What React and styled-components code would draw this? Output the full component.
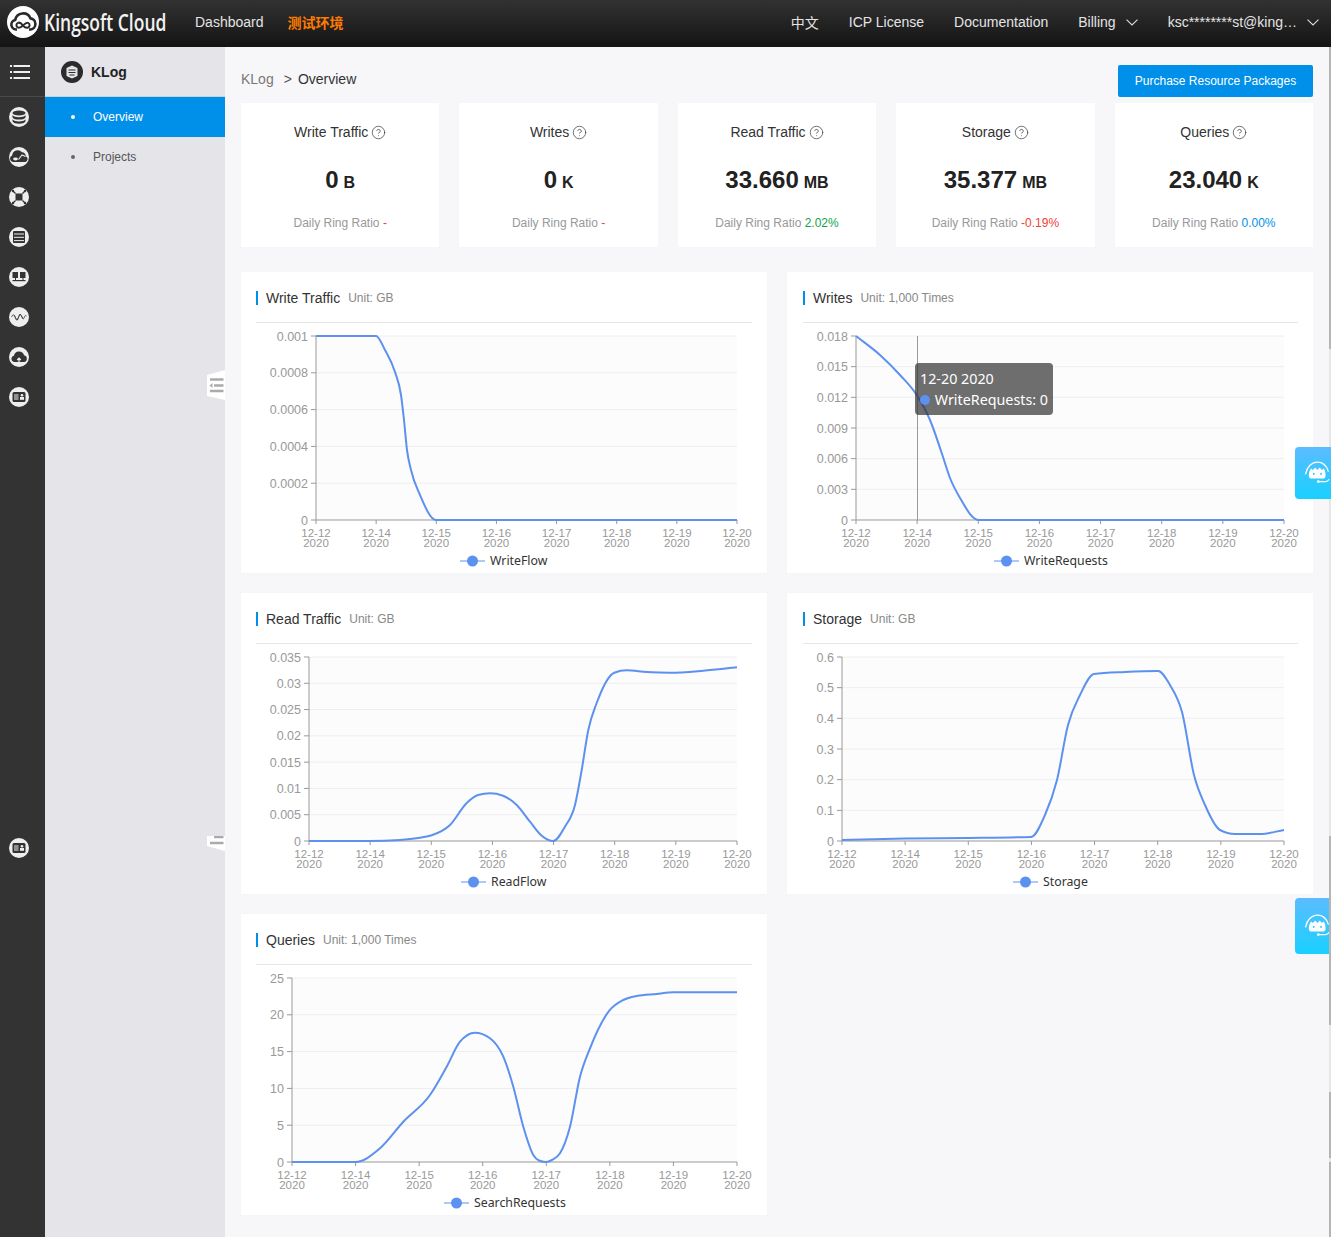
import React from "react";
import styled, { createGlobalStyle } from "styled-components";
import { CircleHelp } from "lucide-react";

const BLUE = "#0090ea";
const LINE = "#5d91ef";
const DATES = ["12-12", "12-14", "12-15", "12-16", "12-17", "12-18", "12-19", "12-20"];

const stats = [
  { title: "Write Traffic", value: "0", unit: "B", ratio: "-", tone: "#f04134" },
  { title: "Writes", value: "0", unit: "K", ratio: "-", tone: "#f04134" },
  { title: "Read Traffic", value: "33.660", unit: "MB", ratio: "2.02%", tone: "#12a34a" },
  { title: "Storage", value: "35.377", unit: "MB", ratio: "-0.19%", tone: "#f04134" },
  { title: "Queries", value: "23.040", unit: "K", ratio: "0.00%", tone: BLUE },
];

// points are page coordinates read off the screenshot, the svg viewBox follows the card origin
const charts = [
  {
    title: "Write Traffic", unit: "Unit: GB", origin: [241, 272], left: 316, right: 737, top: 336,
    yLabels: ["0.001", "0.0008", "0.0006", "0.0004", "0.0002", "0"],
    legend: "WriteFlow", legendX: 460,
    points: [[316, 336], [376, 336], [385, 350], [395, 372], [401, 395], [404, 420], [407, 450], [411, 470], [420, 495], [436, 520], [737, 520]],
  },
  {
    title: "Writes", unit: "Unit: 1,000 Times", origin: [787, 272], left: 856, right: 1284, top: 336, inset: 16,
    yLabels: ["0.018", "0.015", "0.012", "0.009", "0.006", "0.003", "0"],
    legend: "WriteRequests", legendX: 994, crosshair: 917.5,
    points: [[856, 336], [880, 355], [900, 375], [916.7, 395], [930, 420], [941.7, 453], [950, 478], [960, 498], [978.3, 520], [1284, 520]],
    tooltip: { date: "12-20 2020", label: "WriteRequests: 0" },
  },
  {
    title: "Read Traffic", unit: "Unit: GB", origin: [241, 593], left: 309, right: 737, top: 657,
    yLabels: ["0.035", "0.03", "0.025", "0.02", "0.015", "0.01", "0.005", "0"],
    legend: "ReadFlow", legendX: 461,
    points: [[309, 841], [370, 841], [400, 840], [420, 837.7], [431.7, 835.3], [450, 825], [466.7, 803], [478, 795], [490, 793.3], [503, 795.7], [516.7, 805], [530, 821.7], [541.7, 835.7], [553.3, 841], [565, 826.7], [575, 805], [581.7, 770], [588.3, 730], [596.7, 703], [614.3, 672.7], [626.7, 670.3], [646.7, 672], [670, 672.7], [703.3, 670.7], [737, 667.3]],
  },
  {
    title: "Storage", unit: "Unit: GB", origin: [787, 593], left: 842, right: 1284, top: 657, inset: 16,
    yLabels: ["0.6", "0.5", "0.4", "0.3", "0.2", "0.1", "0"],
    legend: "Storage", legendX: 1013,
    points: [[842, 840], [905, 838.5], [968, 838], [1031, 837], [1045, 815], [1057, 780], [1068, 725], [1080, 695], [1094, 674], [1125, 672], [1158, 671], [1170, 685], [1182, 712], [1194, 775], [1205, 805], [1220, 830], [1235, 834], [1260, 834], [1284, 830]],
  },
  {
    title: "Queries", unit: "Unit: 1,000 Times", origin: [241, 914], left: 292, right: 737, top: 978,
    yLabels: ["25", "20", "15", "10", "5", "0"],
    legend: "SearchRequests", legendX: 444,
    points: [[292, 1162], [355.3, 1162], [380, 1148.3], [403.3, 1121.7], [430, 1095], [446.7, 1066.7], [460, 1041.7], [475, 1032.7], [490, 1038.3], [503.3, 1056.7], [513.3, 1086.7], [523.3, 1126.7], [533.3, 1155], [539, 1160.5], [545.7, 1162], [552, 1160], [560, 1153.3], [570, 1126.7], [580, 1076.7], [590, 1048.3], [609.3, 1010.7], [623.3, 1000], [636.7, 996], [656.7, 994], [673.3, 992.3], [737, 992.3]],
  },
];

// same as d3 curveMonotoneX, no overshoot on the flat parts
const monotonePath = (pts) => {
  const n = pts.length;
  const h = [];
  const s = [];
  for (let i = 0; i < n - 1; i++) {
    h.push(pts[i + 1][0] - pts[i][0]);
    s.push((pts[i + 1][1] - pts[i][1]) / h[i]);
  }
  const m = [s[0]];
  for (let i = 1; i < n - 1; i++) {
    const p = (s[i - 1] * h[i] + s[i] * h[i - 1]) / (h[i - 1] + h[i]);
    const sign = (Math.sign(s[i - 1]) + Math.sign(s[i])) / 2;
    m.push(sign * Math.min(Math.abs(s[i - 1]), Math.abs(s[i]), 0.5 * Math.abs(p)) * 2);
  }
  m.push(s[n - 2]);
  let d = `M${pts[0][0]} ${pts[0][1]}`;
  for (let i = 0; i < n - 1; i++) {
    const dx = h[i] / 3;
    d += `C${pts[i][0] + dx} ${pts[i][1] + m[i] * dx} ${pts[i + 1][0] - dx} ${pts[i + 1][1] - m[i + 1] * dx} ${pts[i + 1][0]} ${pts[i + 1][1]}`;
  }
  return d;
};

const Chart = ({ chart }) => {
  const { origin, left, right, top, yLabels, points, legend, legendX, crosshair } = chart;
  const bottom = top + 184;
  const stepY = 184 / (yLabels.length - 1);
  const stepX = (right - left) / 7;
  return (
    <ChartSvg viewBox={`${origin[0]} ${origin[1] + 51} 526 250`}>
      <rect x={left} y={top} width={right - left} height={184} fill="#fcfcfc" />
      {yLabels.map((label, i) => {
        const y = top + i * stepY;
        return (
          <g key={label}>
            {i < yLabels.length - 1 && <line x1={left} x2={right} y1={y} y2={y} stroke="#eeeeee" />}
            <line x1={left - 5} x2={left} y1={y} y2={y} stroke="#999" />
            <AxisText x={left - 8} y={y + 4.5} textAnchor="end" fontSize="12.5">{label}</AxisText>
          </g>
        );
      })}
      <line x1={left} x2={left} y1={top} y2={bottom} stroke="#999" />
      <line x1={left} x2={right} y1={bottom} y2={bottom} stroke="#999" />
      {DATES.map((date, i) => {
        const x = left + i * stepX;
        return (
          <g key={date}>
            <line x1={x} x2={x} y1={bottom} y2={bottom + 4} stroke="#999" />
            <AxisText textAnchor="middle" fontSize="11.5">
              <tspan x={x} y={bottom + 17}>{date}</tspan>
              <tspan x={x} y={bottom + 27}>2020</tspan>
            </AxisText>
          </g>
        );
      })}
      {crosshair && <line x1={crosshair} x2={crosshair} y1={top} y2={bottom} stroke="#999" />}
      <path d={monotonePath(points)} fill="none" stroke={LINE} strokeWidth="2" />
      <line x1={legendX} x2={legendX + 25} y1={bottom + 41} y2={bottom + 41} stroke={LINE} />
      <circle cx={legendX + 12.5} cy={bottom + 41} r="5.5" fill={LINE} />
      <LegendText x={legendX + 30} y={bottom + 45}>{legend}</LegendText>
    </ChartSvg>
  );
};

const Round = ({ children }) => (
  <svg width="20" height="20" viewBox="0 0 20 20">
    <circle cx="10" cy="10" r="10" fill="#eeeeee" />
    {children}
  </svg>
);

const railIcons = [
  <Round key="db">
    <g fill="#333">
      <ellipse cx="10" cy="6" rx="6.5" ry="2.6" />
      <path d="M3.500 8c1 1.500 3.500 2.200 6.500 2.200s5.500-.7 6.500-2.200v2.400c-1 1.500-3.500 2.200-6.500 2.200s-5.500-.7-6.500-2.200z" />
      <path d="M3.500 12.300c1 1.500 3.500 2.200 6.500 2.200s5.500-.7 6.500-2.200v1.900c-1 1.800-3.500 2.500-6.500 2.500s-5.500-.7-6.500-2.500z" />
    </g>
  </Round>,
  <Round key="cloud">
    <path d="M4 15a3.300 3.300 0 0 1-.8-6.400A5.500 5.500 0 0 1 13 5.300a3.800 3.800 0 0 1 3.800 4 3 3 0 0 1-.5 5.700z" fill="#333" />
    <path d="M9.500 12.500l3.500-4.500 3.500 1.500" fill="none" stroke="#eee" strokeWidth="1.100" />
    <ellipse cx="6.500" cy="12" rx="2.400" ry="1.400" fill="#eee" />
  </Round>,
  <Round key="cross">
    <rect x="6.500" y="6.500" width="7" height="7" fill="#333" />
    <g stroke="#333" strokeWidth="1.300">
      <path d="M3.500 3.500l3 3M16.500 3.500l-3 3M3.500 16.500l3-3M16.500 16.500l-3-3" />
    </g>
    <g fill="#333">
      <circle cx="4" cy="4" r="1.200" /><circle cx="16" cy="4" r="1.200" /><circle cx="4" cy="16" r="1.200" /><circle cx="16" cy="16" r="1.200" />
    </g>
  </Round>,
  <Round key="server">
    <rect x="4" y="4" width="12" height="12" rx="1" fill="#333" />
    <path d="M5 7h10M5 10.300h10M5 13.600h10" stroke="#eee" strokeWidth="1" />
  </Round>,
  <Round key="net">
    <g fill="#333">
      <rect x="3.500" y="5" width="5.500" height="6" />
      <rect x="11" y="5" width="5.500" height="6" />
      <path d="M6 11h1v2H6zM13.500 11h1v2h-1z" />
      <rect x="3.500" y="13" width="13" height="1.200" />
    </g>
  </Round>,
  <Round key="wave">
    <path d="M2.500 10c1.500-3 2.500-3 3.500 0s2 4.500 3 2 1.500-6 3-4 2 5.500 3 3 1.500-3 2.500-2" fill="none" stroke="#333" strokeWidth=".8" />
    <path d="M5 8l3 5 3-6 3 5" fill="none" stroke="#333" strokeWidth=".7" />
  </Round>,
  <Round key="upload">
    <path d="M5.500 15a3.200 3.200 0 0 1-.6-6.300A5.200 5.200 0 0 1 15 8.300a3.400 3.400 0 0 1 0 6.700z" fill="#333" />
    <path d="M10 15.500v-4M8.200 13l1.800-1.800 1.800 1.800" fill="none" stroke="#eee" strokeWidth="1.200" />
  </Round>,
];

const CardIcon = () => (
  <Round>
    <rect x="3.500" y="5" width="13" height="10" rx="1.500" fill="#333" />
    <path d="M5 8h4.500M5 10h4.500M5 12h4.500" stroke="#eee" strokeWidth="1" />
    <circle cx="13" cy="8.300" r="1.300" fill="#eee" />
    <rect x="11" y="10" width="4" height="2.800" fill="#eee" />
  </Round>
);

const Logo = () => (
  <svg width="32" height="32" viewBox="0 0 32 32">
    <circle cx="16" cy="16" r="16" fill="#fff" />
    <path d="M10 23.500H9a4.800 4.800 0 0 1-.8-9.500 8 8 0 0 1 15.300-1.600 5.600 5.600 0 0 1 .1 11.100H22" fill="none" stroke="#2a2a2a" strokeWidth="2.600" />
    <path d="M16 19.500c-2-2.600-3.700-3.500-5.300-2.500-1.700 1-1.700 3.300 0 4.400 1.800 1 3.500-.2 5.300-1.900s3.500-3.500 5.300-2.500c1.700 1 1.700 3.300 0 4.400-1.800 1-3.500.1-5.300-1.900z" fill="none" stroke="#2a2a2a" strokeWidth="2" />
  </svg>
);

const Chevron = () => (
  <svg width="12" height="7" viewBox="0 0 12 7">
    <path d="M.5.700L6 6l5.500-5.300" fill="none" stroke="#ddd" strokeWidth="1.100" />
  </svg>
);

const Headset = () => (
  <svg width="32" height="30" viewBox="0 0 32 30">
    <path d="M4 16C5.500 8 11 3 17 3s10 4 12 10" fill="none" stroke="#fff" strokeWidth="1.400" strokeLinecap="round" />
    <path d="M7.500 18c0-3.500 1-6 2.500-8l2 1.800 2.500-3 2.500 3 2.500-3 2.500 3 2-1.800c1.500 2 2 4.500 2 8 0 2-1.500 3.200-3.500 3.200H11c-2 0-3.500-1.200-3.500-3.200z" fill="#fff" />
    <ellipse cx="13" cy="16" rx="1" ry="1.200" fill="#3cc5ff" />
    <ellipse cx="21" cy="16" rx="1" ry="1.200" fill="#3cc5ff" />
    <path d="M18 24.500h8c2 0 3-.8 4-2.500" fill="none" stroke="#fff" strokeWidth="1.200" />
    <circle cx="18" cy="24.500" r="1.500" fill="#fff" />
  </svg>
);

const FoldIcon = () => (
  <svg width="18" height="30" viewBox="0 0 18 30">
    <path d="M0 5L18 0v30L0 26z" fill="#fff" />
    <path d="M3 9.500h13.500M7 15.500h9.500M3 21h13.500" stroke="#aaa" strokeWidth="2.600" />
    <path d="M2.500 15.500l3-2.500v5z" fill="#aaa" />
  </svg>
);

const FoldIconCut = () => (
  <svg width="18" height="15" viewBox="0 0 18 15">
    <path d="M0 0h18v15L0 10z" fill="#fff" />
    <path d="M7 1h9.500M3 7h13.500" stroke="#aaa" strokeWidth="2.600" />
  </svg>
);

const scrollParts = [
  [302, true], [487, false], [189, true], [67, false], [66, true], [4, false], [75, true],
];

const App = () => (
  <Page>
    <GlobalStyle />
    <Header>
      <Brand>
        <Logo />
        <BrandName>Kingsoft Cloud</BrandName>
      </Brand>
      <NavLink $left="29px">Dashboard</NavLink>
      <TestEnv>测试环境</TestEnv>
      <NavRight>
        <NavLink>中文</NavLink>
        <NavLink>ICP License</NavLink>
        <NavLink>Documentation</NavLink>
        <NavDrop>Billing <Chevron /></NavDrop>
        <NavDrop>ksc********st@king… <Chevron /></NavDrop>
      </NavRight>
    </Header>
    <Body>
      <Rail>
        <MenuRow>
          <svg width="20" height="14" viewBox="0 0 20 14">
            <path d="M3.500 1H20M3.500 7H20M3.500 13H20" stroke="#eee" strokeWidth="2" />
            <path d="M0 1h2M0 7h2M0 13h2" stroke="#eee" strokeWidth="2" />
          </svg>
        </MenuRow>
        {railIcons.map((icon) => <RailItem key={icon.key}>{icon}</RailItem>)}
        <RailItem><CardIcon /></RailItem>
        <RailItem $gap="411px"><CardIcon /></RailItem>
      </Rail>
      <Sidebar>
        <SideHead>
          <svg width="22" height="22" viewBox="0 0 22 22">
            <circle cx="11" cy="11" r="11" fill="#2b2b2b" />
            <path d="M11 4.500l5.500 2.500v8L11 17.500 5.500 15V7z" fill="#e4e4e9" />
            <path d="M7.500 9h7M7.500 11.500h7M8.500 14h5" stroke="#2b2b2b" strokeWidth="1.200" />
          </svg>
          <SideTitle>KLog</SideTitle>
        </SideHead>
        <SideItem $active>Overview</SideItem>
        <SideItem>Projects</SideItem>
        <FoldTab $top="323px"><FoldIcon /></FoldTab>
        <FoldTab $top="789px"><FoldIconCut /></FoldTab>
      </Sidebar>
      <Main>
        <TopRow>
          <Crumbs>
            <CrumbLink>KLog</CrumbLink>
            <CrumbSep>&gt;</CrumbSep>
            <span>Overview</span>
          </Crumbs>
          <BuyButton>Purchase Resource Packages</BuyButton>
        </TopRow>
        <StatRow>
          {stats.map((s) => (
            <StatCard key={s.title}>
              <StatTitle>{s.title}<CircleHelp size={15} strokeWidth={1.2} color="#444" /></StatTitle>
              <StatValue>{s.value}<StatUnit>{s.unit}</StatUnit></StatValue>
              <StatRatio>Daily Ring Ratio <RatioValue $tone={s.tone}>{s.ratio}</RatioValue></StatRatio>
            </StatCard>
          ))}
        </StatRow>
        <ChartGrid>
          {charts.map((chart) => (
            <ChartCard key={chart.title}>
              <ChartHead $inset={chart.inset}>
                <ChartTitle>{chart.title}</ChartTitle>
                <ChartUnit>{chart.unit}</ChartUnit>
              </ChartHead>
              <Chart chart={chart} />
              {chart.tooltip && (
                <Tooltip>
                  <div>{chart.tooltip.date}</div>
                  <TooltipRow><TooltipDot />{chart.tooltip.label}</TooltipRow>
                </Tooltip>
              )}
            </ChartCard>
          ))}
        </ChartGrid>
      </Main>
    </Body>
    <FloatButton $top="447px" $height="52px" $over><Headset /></FloatButton>
    <FloatButton $top="898px" $height="56px"><Headset /></FloatButton>
    <ScrollStrip>
      {scrollParts.map(([h, dark], i) => <ScrollPart key={i} $h={h} $dark={dark} />)}
    </ScrollStrip>
  </Page>
);

export default App;

const GlobalStyle = createGlobalStyle`
  html, body {
    margin: 0;
    padding: 0;
    overflow: hidden;
    background: #f7f7f9;
    font-family: "Liberation Sans", "Noto Sans CJK SC", sans-serif;
  }
`;

const Page = styled.div`
  position: relative;
  width: 1331px;
  height: 1237px;
  overflow: hidden;
`;

const Header = styled.header`
  display: flex;
  align-items: center;
  height: 47px;
  padding: 0 12px 3px 7px;
  box-sizing: border-box;
  background: linear-gradient(#323232, #141414);
`;

const Brand = styled.div`
  display: flex;
  align-items: center;
  gap: 5px;
`;

const BrandName = styled.span`
  display: block;
  width: 122px;
  color: #f2f2f2;
  font-family: "Open Sans", sans-serif;
  font-size: 23px;
  font-weight: 600;
  white-space: nowrap;
  transform: scaleX(0.76);
  transform-origin: left center;
`;

const NavLink = styled.span`
  margin-left: ${(props) => props.$left || 0};
  color: #e4e4e4;
  font-size: 14px;
  white-space: nowrap;
`;

const TestEnv = styled.span`
  margin-left: 24px;
  color: #ff7a00;
  font-size: 14px;
  font-weight: 700;
`;

const NavRight = styled.nav`
  display: flex;
  align-items: center;
  gap: 30px;
  margin-left: auto;
`;

const NavDrop = styled(NavLink)`
  display: flex;
  align-items: center;
  gap: 10px;
`;

const Body = styled.div`
  display: flex;
  height: 1190px;
`;

const Rail = styled.aside`
  flex: 0 0 45px;
  background: #333333;
`;

const MenuRow = styled.div`
  display: flex;
  align-items: center;
  padding-left: 10px;
  height: 49px;
  border-bottom: 1px solid #4a4a4a;
`;

const RailItem = styled.div`
  display: flex;
  align-items: center;
  height: 40px;
  padding-left: 9px;
  margin-top: ${(props) => props.$gap || 0};
`;

const Sidebar = styled.aside`
  position: relative;
  flex: 0 0 180px;
  background: #e4e4e9;
`;

const SideHead = styled.div`
  display: flex;
  align-items: center;
  gap: 8px;
  height: 49px;
  padding-left: 16px;
  border-bottom: 1px solid #cfcfd2;
`;

const SideTitle = styled.span`
  color: #222;
  font-size: 14px;
  font-weight: 700;
`;

const SideItem = styled.div`
  position: relative;
  height: 40px;
  line-height: 40px;
  padding-left: 48px;
  font-size: 12px;
  color: ${(props) => (props.$active ? "#fff" : "#555")};
  background: ${(props) => (props.$active ? BLUE : "transparent")};

  &::before {
    content: "";
    position: absolute;
    left: 26px;
    top: 18px;
    width: 4px;
    height: 4px;
    border-radius: 50%;
    background: ${(props) => (props.$active ? "#fff" : "#666")};
  }
`;

const FoldTab = styled.div`
  position: absolute;
  right: 0;
  top: ${(props) => props.$top};
  line-height: 0;
`;

const Main = styled.main`
  flex: 1;
  min-width: 0;
  padding: 18px 18px 0 16px;
  box-sizing: border-box;
`;

const TopRow = styled.div`
  display: flex;
  align-items: center;
  justify-content: space-between;
  height: 32px;
  margin-bottom: 6px;
`;

const Crumbs = styled.div`
  display: flex;
  margin-bottom: 4px;
  color: #333;
  font-size: 14px;
`;

const CrumbLink = styled.span`
  color: #777;
`;

const CrumbSep = styled.span`
  margin: 0 6px 0 10px;
  color: #555;
`;

const BuyButton = styled.button`
  width: 195px;
  height: 32px;
  padding: 0;
  border: 0;
  border-radius: 2px;
  background: ${BLUE};
  color: #fff;
  font-family: inherit;
  font-size: 12px;
`;

const StatRow = styled.section`
  display: grid;
  grid-template-columns: repeat(5, 1fr);
  gap: 20px;
  margin-bottom: 25px;
`;

const StatCard = styled.div`
  display: flex;
  flex-direction: column;
  align-items: center;
  height: 144px;
  background: #fff;
  box-shadow: 0 0 2px rgba(0, 0, 0, 0.02);
`;

const StatTitle = styled.div`
  display: flex;
  align-items: center;
  gap: 3px;
  height: 16px;
  margin-top: 21px;
  color: #333;
  font-size: 14px;
`;

const StatValue = styled.div`
  margin-top: 20px;
  height: 40px;
  line-height: 40px;
  color: #222;
  font-size: 24px;
  font-weight: 700;
`;

const StatUnit = styled.span`
  margin-left: 5px;
  font-size: 16px;
`;

const StatRatio = styled.div`
  margin-top: 16px;
  color: #999;
  font-size: 12px;
`;

const RatioValue = styled.span`
  color: ${(props) => props.$tone};
`;

const ChartGrid = styled.section`
  display: grid;
  grid-template-columns: repeat(2, 1fr);
  gap: 20px;
`;

const ChartCard = styled.div`
  position: relative;
  height: 301px;
  background: #fff;
  box-shadow: 0 0 2px rgba(0, 0, 0, 0.02);
`;

const ChartHead = styled.div`
  display: flex;
  align-items: center;
  gap: 8px;
  height: 51px;
  margin: 0 15px 0 ${(props) => props.$inset || 15}px;
  box-sizing: border-box;
  padding-top: 2px;
  border-bottom: 1px solid #e6e6e6;
`;

const ChartTitle = styled.span`
  padding-left: 8px;
  border-left: 2px solid ${BLUE};
  color: #333;
  font-size: 14px;
  line-height: 14px;
`;

const ChartUnit = styled.span`
  color: #888;
  font-size: 12px;
`;

const ChartSvg = styled.svg`
  display: block;
  width: 526px;
  height: 250px;
`;

const AxisText = styled.text`
  fill: #999;
  font-family: "Liberation Sans", sans-serif;
`;

const LegendText = styled.text`
  fill: #333;
  font-family: "Noto Sans", sans-serif;
  font-size: 12.3px;
`;

const Tooltip = styled.div`
  position: absolute;
  left: 128px;
  top: 91px;
  width: 138px;
  height: 52px;
  padding: 5px 5px;
  box-sizing: border-box;
  border-radius: 4px;
  background: rgba(50, 50, 50, 0.7);
  color: #fff;
  font-family: "Noto Sans", sans-serif;
  font-size: 14.3px;
  line-height: 21px;
  white-space: nowrap;
`;

const TooltipRow = styled.div`
  display: flex;
  align-items: center;
`;

const TooltipDot = styled.span`
  width: 10px;
  height: 10px;
  margin-right: 5px;
  border-radius: 50%;
  background: ${LINE};
`;

const FloatButton = styled.div`
  position: absolute;
  right: 0;
  top: ${(props) => props.$top};
  z-index: ${(props) => (props.$over ? 2 : 0)};
  width: 36px;
  height: ${(props) => props.$height};
  display: flex;
  align-items: center;
  padding-left: 7px;
  box-sizing: border-box;
  overflow: hidden;
  border-radius: 4px 0 0 4px;
  background: linear-gradient(#5bbcff, #19d0ff);
`;

const ScrollStrip = styled.div`
  position: absolute;
  right: 0;
  top: 47px;
  z-index: 1;
  width: 2px;
  display: flex;
  flex-direction: column;
`;

const ScrollPart = styled.div`
  height: ${(props) => props.$h}px;
  background: ${(props) => (props.$dark ? "#b5b5b5" : "#e6e6e6")};
`;
